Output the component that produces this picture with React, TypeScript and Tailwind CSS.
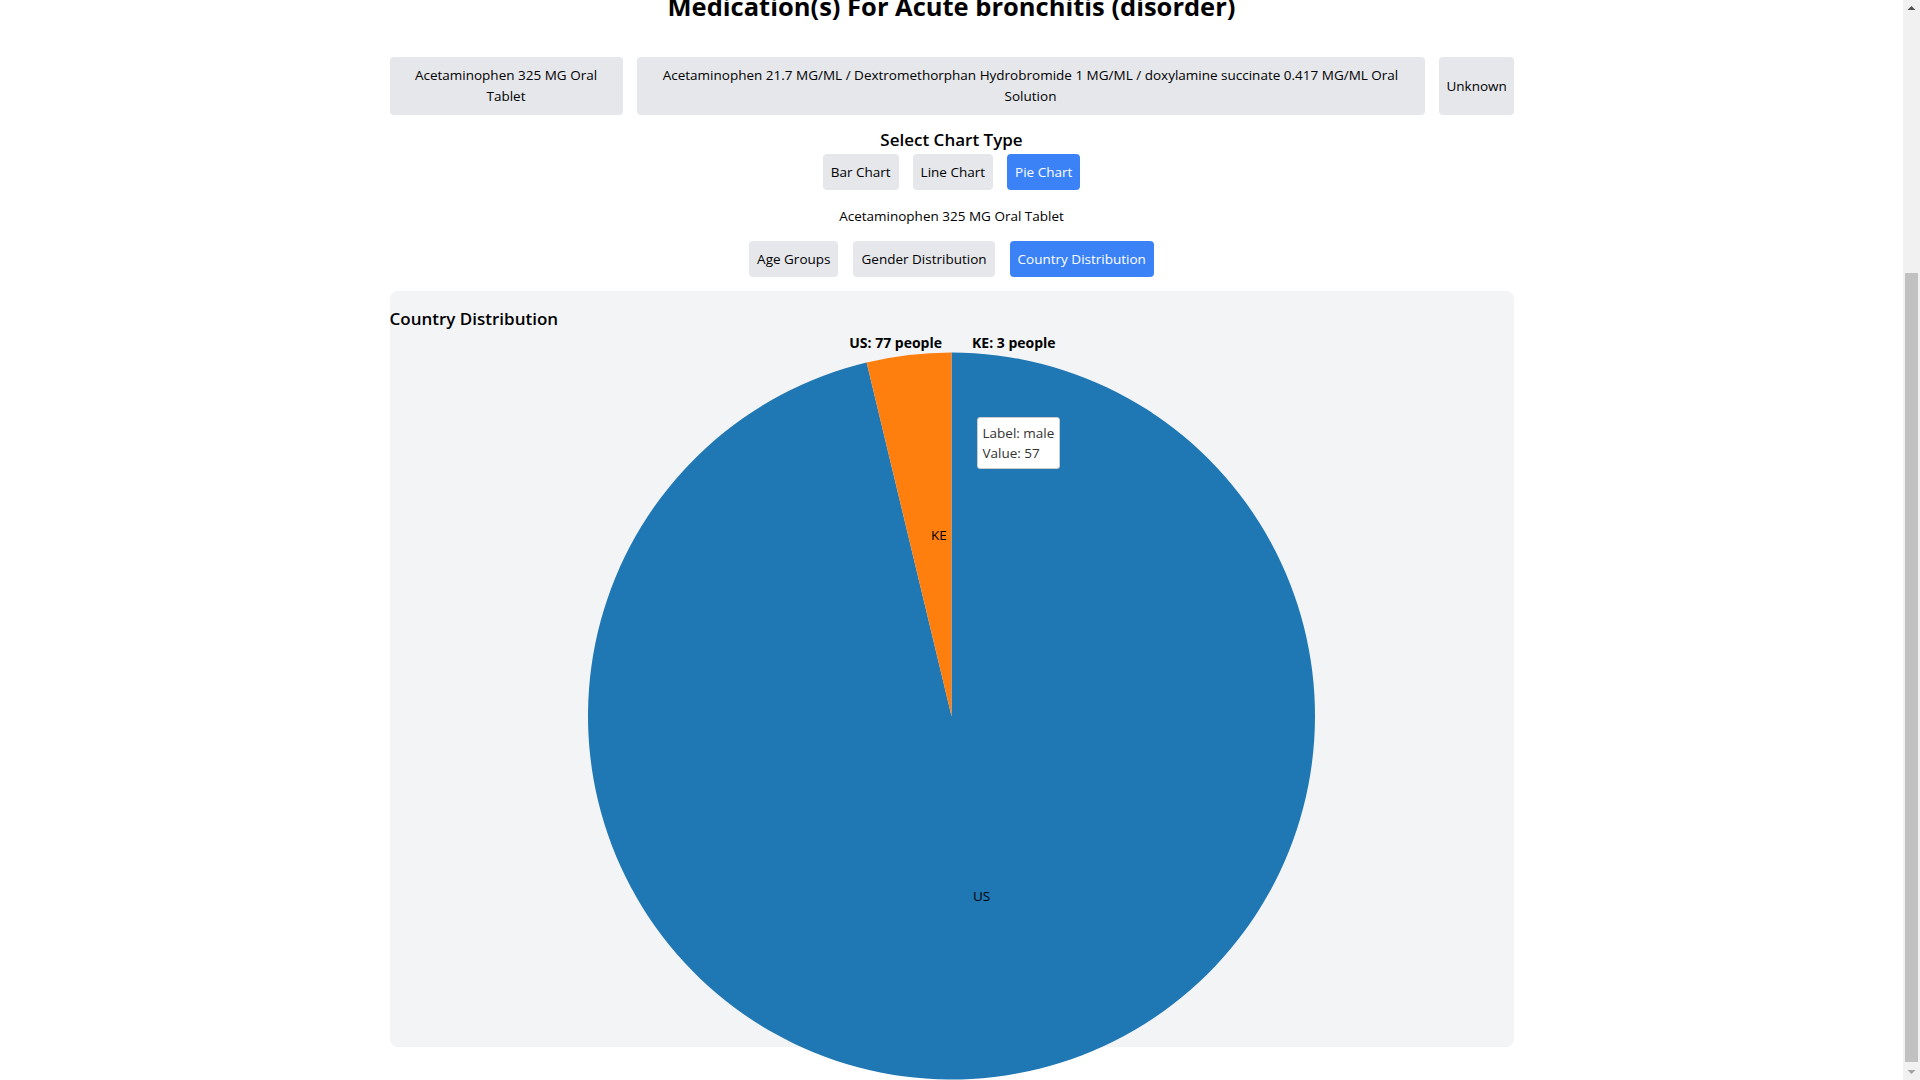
import React, { useEffect } from "react";

const R = 363.5;
const CX = 561.5;
const CY = 383;
const KE_ANGLE = (13.5 * Math.PI) / 180;
const KX = CX - R * Math.sin(KE_ANGLE);
const KY = CY - R * Math.cos(KE_ANGLE);

function PieChart() {
  const usPath = `M ${CX} ${CY} L ${CX} ${CY - R} A ${R} ${R} 0 1 1 ${KX} ${KY} Z`;
  const kePath = `M ${CX} ${CY} L ${KX} ${KY} A ${R} ${R} 0 0 1 ${CX} ${CY - R} Z`;
  return (
    <svg width="1124" height="760" className="block overflow-visible" style={{ overflow: "visible" }}>
      <path d={usPath} fill="#1f77b4" />
      <path d={kePath} fill="#ff7f0e" />
      <text x="552" y="11" textAnchor="end" dominantBaseline="middle" fontSize="14" fontWeight="700" fill="#000">
        US: 77 people
      </text>
      <text x="582" y="11" textAnchor="start" dominantBaseline="middle" fontSize="14" fontWeight="700" fill="#000">
        KE: 3 people
      </text>
      <text x="541" y="203" textAnchor="start" dominantBaseline="middle" fontSize="13.5" fill="#000">
        KE
      </text>
      <text x="583" y="564" textAnchor="start" dominantBaseline="middle" fontSize="13.5" fill="#000">
        US
      </text>
    </svg>
  );
}

function Scrollbar() {
  return (
    <div className="fixed right-0 top-0 h-screen w-[17px] bg-[#f1f1f1]">
      <svg width="17" height="17" className="absolute left-0 top-0">
        <path d="M4.5 10 L8.5 6 L12.5 10 Z" fill="#505050" />
      </svg>
      <div className="absolute left-[2px] top-[273px] h-[789px] w-[13px] bg-[#c1c1c1]" />
      <svg width="17" height="17" className="absolute bottom-0 left-0">
        <path d="M4.5 7 L8.5 11 L12.5 7 Z" fill="#a3a3a3" />
      </svg>
    </div>
  );
}

export default function App() {
  useEffect(() => {
    window.scrollTo(0, 350);
    requestAnimationFrame(() => window.scrollTo(0, 350));
  }, []);

  const btn = "rounded-[4px] px-2 py-2 text-[13.5px] leading-[20px]";
  const gray = "bg-[#e5e7eb] text-black";
  const blue = "bg-[#3b82f6] text-white";
  const med = "shrink-0 rounded-[4px] px-2 py-2 text-center text-[13.5px] leading-[21px] bg-[#e5e7eb] text-black";

  return (
    <div className="h-[1432px] w-[1903px] bg-white text-black" style={{ fontFamily: "'Open Sans', 'Noto Sans', sans-serif" }}>
      <div className="h-[338px]" />
      <div className="mx-auto w-[1124px]">
        <h1 className="mb-[33px] text-center text-[25.5px] font-bold leading-[36px]">
          Medication(s) For Acute bronchitis (disorder)
        </h1>

        <div className="flex gap-3.5">
          <button className={`w-[233px] ${med}`}>Acetaminophen 325 MG Oral Tablet</button>
          <button className={`w-[788px] ${med}`}>
            Acetaminophen 21.7 MG/ML / Dextromethorphan Hydrobromide 1 MG/ML / doxylamine succinate 0.417 MG/ML Oral Solution
          </button>
          <button className={`w-[75px] ${med}`}>Unknown</button>
        </div>

        <h2 className="mt-[11px] text-center text-[17px] font-semibold leading-[28px]">Select Chart Type</h2>
        <div className="flex justify-center gap-3.5">
          <button className={`${btn} ${gray}`}>Bar Chart</button>
          <button className={`${btn} ${gray}`}>Line Chart</button>
          <button className={`${btn} ${blue}`}>Pie Chart</button>
        </div>

        <p className="my-4 text-center text-[13.5px] leading-[20px]">Acetaminophen 325 MG Oral Tablet</p>

        <div className="-mt-px flex justify-center gap-[15px]">
          <button className={`${btn} ${gray}`}>Age Groups</button>
          <button className={`${btn} ${gray}`}>Gender Distribution</button>
          <button className={`${btn} ${blue}`}>Country Distribution</button>
        </div>

        <div className="relative mt-3.5 h-[756px] rounded-lg bg-[#f3f4f6] pt-[14px]">
          <h3 className="text-[17px] font-semibold leading-[28px]">Country Distribution</h3>
          <PieChart />
          <div className="absolute left-[587px] top-[126px] rounded-[3px] border border-[#cccccc] bg-white px-[5px] py-[5px] text-[13.5px] leading-[20px] text-[#333333]">
            <div>Label: male</div>
            <div>Value: 57</div>
          </div>
        </div>
      </div>
      <Scrollbar />
    </div>
  );
}
